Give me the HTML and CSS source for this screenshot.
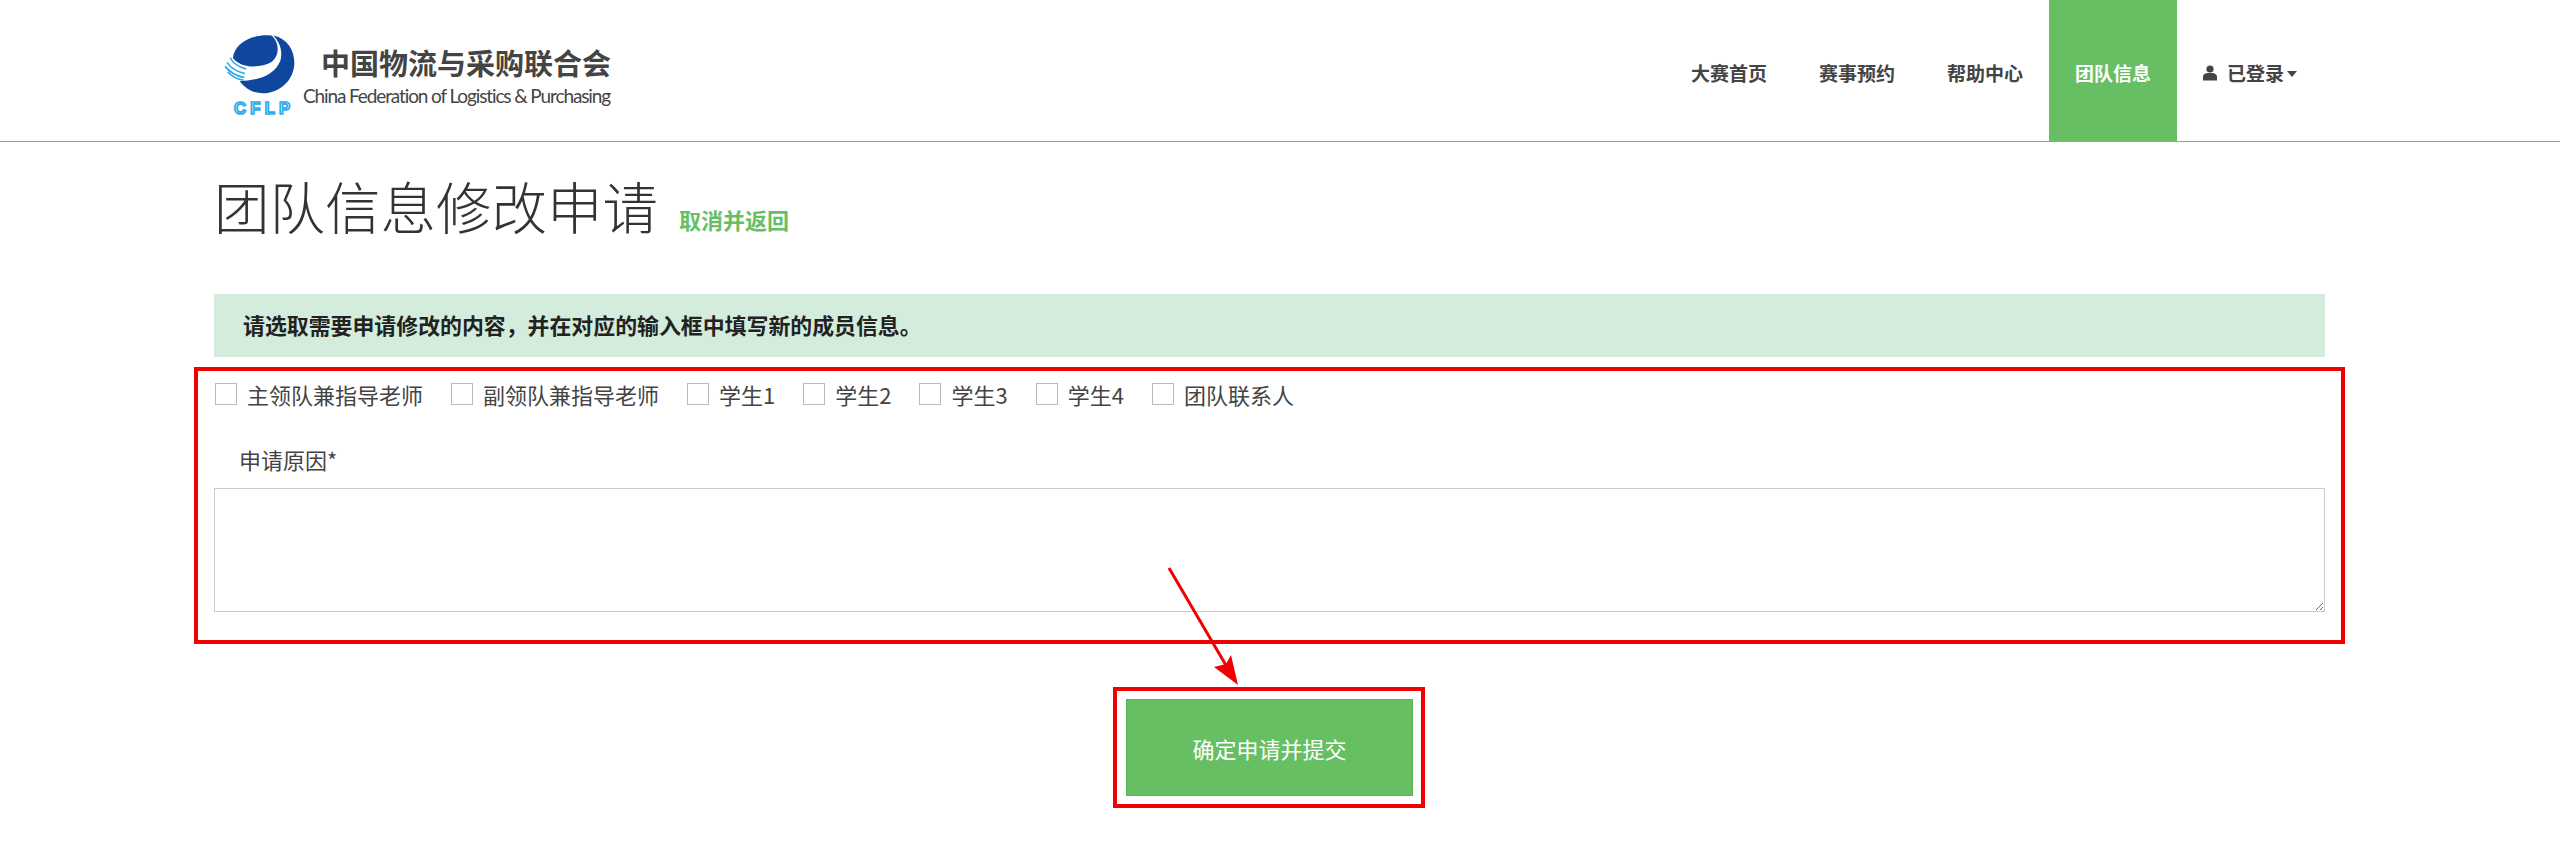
FILE: index.html
```html
<!DOCTYPE html>
<html lang="zh-CN">
<head>
  <meta charset="UTF-8" />
  <title>团队信息修改申请</title>
  <link rel="stylesheet" href="styles.css">
</head>
<body>
  <header class="site-header">
    <a class="logo" href="#">
      <svg class="logo-mark" viewBox="70 95 220 255" width="73" height="85">
        <path fill="#0f479f" d="M100 172C104 132 150 100 216 105C240 125 242 165 216 185C190 201 150 201 126 192C115 187 104 180 100 172Z"/>
        <path fill="#0f479f" d="M222 105C265 115 285 150 285 187C285 240 240 279 190 279C160 279 136 264 120 242C170 242 226 226 243 180C251 150 240 125 222 105Z"/>
        <g fill="none" stroke="#35a9e6" stroke-width="5">
          <path d="M92 172C100 190 118 200 140 206"/>
          <path d="M82 186C94 204 112 214 136 220"/>
          <path d="M76 198C90 216 108 226 134 232"/>
          <path d="M84 214C96 228 112 236 132 240"/>
        </g>
        <text class="logo-cflp" x="103" y="341">CFLP</text>
      </svg>
      <span class="logo-text">
        <span class="logo-cn">中国物流与采购联合会</span>
        <span class="logo-en">China Federation of Logistics &amp; Purchasing</span>
      </span>
    </a>
    <ul class="nav">
      <li><a href="#">大赛首页</a></li>
      <li><a href="#">赛事预约</a></li>
      <li><a href="#">帮助中心</a></li>
      <li class="active"><a href="#">团队信息</a></li>
      <li>
        <a href="#">
          <svg class="user-icon" viewBox="0 0 14 16" width="14" height="16">
            <circle cx="7" cy="4" r="3.6" fill="#444"/>
            <path fill="#444" d="M0 15.5V11.5C0 9.5 2 8.4 4.2 8H9.8C12 8.4 14 9.5 14 11.5V15.5Z"/>
          </svg>
          已登录<span class="caret"></span>
        </a>
      </li>
    </ul>
  </header>

  <main class="container">
    <h1 class="page-title">团队信息修改申请<a class="back-link" href="#">取消并返回</a></h1>

    <div class="alert">请选取需要申请修改的内容，并在对应的输入框中填写新的成员信息。</div>

    <form>
      <div class="change-section">
        <div class="check-row">
          <label class="check"><input type="checkbox">主领队兼指导老师</label>
          <label class="check"><input type="checkbox">副领队兼指导老师</label>
          <label class="check"><input type="checkbox">学生1</label>
          <label class="check"><input type="checkbox">学生2</label>
          <label class="check"><input type="checkbox">学生3</label>
          <label class="check"><input type="checkbox">学生4</label>
          <label class="check"><input type="checkbox">团队联系人</label>
        </div>
        <label class="reason-label" for="reason">申请原因*</label>
        <textarea id="reason" class="reason"></textarea>
        <span class="red-box section-box"></span>
      </div>

      <div class="submit-row">
        <div class="submit-wrap">
          <button class="submit-btn" type="button">确定申请并提交</button>
          <span class="red-box button-box"></span>
          <svg class="arrow" viewBox="0 0 80 125" width="80" height="125">
            <path d="M5 4L63 103" stroke="#f00000" stroke-width="3" fill="none"/>
            <path d="M74 121L50 103L62 100L67 91Z" fill="#f00000"/>
          </svg>
        </div>
      </div>
    </form>
  </main>
</body>
</html>
```
FILE: styles.css
```css
* {
  box-sizing: border-box;
}

body {
  min-height: 858px;
  margin: 0;
  background: #fff;
  color: #444;
  font-family: "Noto Sans CJK SC", sans-serif;
  font-size: 22px;
}

a {
  text-decoration: none;
}

/* header */
.site-header {
  display: flex;
  justify-content: space-between;
  height: 142px;
  padding: 0 237px 0 223px;
  border-bottom: 1px solid #7ab776;
}

.logo {
  display: flex;
  align-items: flex-start;
  padding-top: 32px;
}

.logo-mark {
  flex: none;
  overflow: visible;
}

.logo-cflp {
  font-family: "Liberation Sans", sans-serif;
  font-size: 50px;
  font-weight: 700;
  letter-spacing: 13px;
  fill: #fff;
  stroke: #29a9e8;
  stroke-width: 5px;
}

.logo-text {
  display: flex;
  flex-direction: column;
  margin-left: 7px;
  padding-top: 9px;
}

.logo-cn {
  margin-left: 18px;
  color: #444;
  font-size: 29px;
  font-weight: 700;
  line-height: 42px;
}

.logo-en {
  color: #444;
  font-family: Lato, sans-serif;
  font-size: 19px;
  letter-spacing: -1.12px;
  line-height: 26px;
  white-space: nowrap;
}

.nav {
  display: flex;
  margin: 0;
  padding: 0;
  list-style: none;
}

.nav a {
  display: flex;
  align-items: center;
  height: 141px;
  padding: 4px 26px 0;
  color: #444;
  font-size: 19px;
  font-weight: 700;
}

.nav .active a {
  background: #67bf63;
  color: #fff;
}

.user-icon {
  margin-right: 10px;
}

.caret {
  width: 0;
  height: 0;
  margin-left: 3px;
  margin-top: 3px;
  border-top: 6px solid #444;
  border-left: 5px solid transparent;
  border-right: 5px solid transparent;
}

/* page */
.container {
  width: 2111px;
  margin-left: 214px;
}

.page-title {
  display: flex;
  align-items: baseline;
  height: 152px;
  margin: 0;
  padding-top: 28px;
  color: #333;
  font-size: 55.5px;
  font-weight: 300;
  line-height: 70px;
}

.back-link {
  margin-left: 21px;
  color: #67bf63;
  font-size: 22px;
  font-weight: 700;
}

.alert {
  height: 63px;
  padding-left: 29px;
  background: #d4ecdc;
  color: #222;
  font-size: 21.9px;
  font-weight: 700;
  line-height: 61px;
}

.change-section {
  position: relative;
  margin-top: 10px;
  padding-top: 9px;
}

.check-row {
  display: flex;
  gap: 28px;
  height: 36px;
  padding-left: 1px;
}

.check {
  display: flex;
  align-items: center;
  line-height: 36px;
}

.check input {
  appearance: none;
  width: 22px;
  height: 22px;
  margin: 0 10px 0 0;
  border: 1px solid #bbb;
  background: #fff;
}

.reason-label {
  display: block;
  margin-top: 32px;
  padding-left: 25px;
  line-height: 30px;
}

.reason {
  display: block;
  width: 100%;
  height: 124px;
  margin-top: 14px;
  border: 1px solid #ccc;
  background: #fff;
}

/* red annotations drawn over the page */
.red-box {
  position: absolute;
  border: 4px solid #f00000;
  pointer-events: none;
}

.section-box {
  top: 0;
  left: -20px;
  right: -20px;
  bottom: -32px;
}

.submit-row {
  display: flex;
  justify-content: center;
  margin-top: 87px;
}

.submit-wrap {
  position: relative;
}

.submit-btn {
  display: block;
  width: 287px;
  height: 97px;
  border: 1px solid #5bb557;
  background: #67bf63;
  color: #fff;
  font-family: inherit;
  font-size: 22px;
}

.button-box {
  top: -12px;
  left: -13px;
  right: -12px;
  bottom: -12px;
}

.arrow {
  position: absolute;
  top: -135px;
  left: 38px;
}
```
